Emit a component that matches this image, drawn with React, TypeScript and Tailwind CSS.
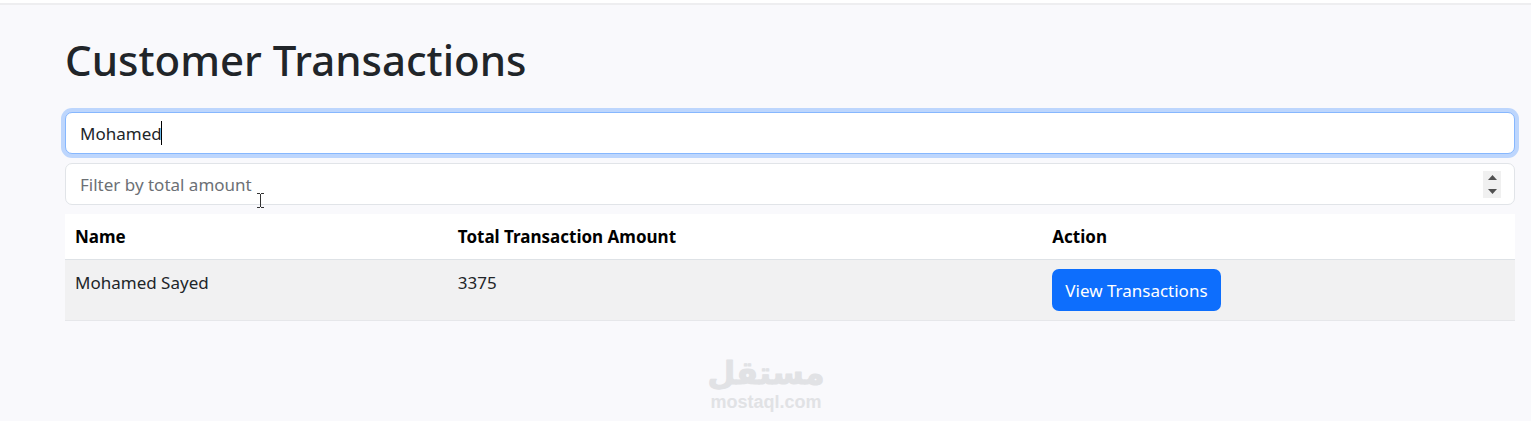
import { useRef, useState } from 'react';

interface Customer {
  id: number;
  name: string;
  total: number;
}

const customers: Customer[] = [
  { id: 1, name: 'Mohamed Sayed', total: 3375 },
  { id: 2, name: 'Ahmed Ali', total: 3000 },
];

function Watermark() {
  return (
    <svg
      className="w-32 h-16 fill-[#e1e2e5] stroke-[#e1e2e5]"
      viewBox="0 0 128 64"
      role="img"
      aria-label="mostaql.com"
    >
      <text
        x="64"
        y="31"
        textAnchor="middle"
        direction="rtl"
        className="text-[32px] font-bold font-['DejaVu_Sans',sans-serif]"
        strokeWidth="1"
        strokeLinejoin="round"
      >
        مستقل
      </text>
      <text
        x="64"
        y="55"
        textAnchor="middle"
        stroke="none"
        className="text-[18px] font-bold font-['Liberation_Sans',sans-serif]"
      >
        mostaql.com
      </text>
    </svg>
  );
}

export default function App() {
  const [nameFilter, setNameFilter] = useState('Mohamed');
  const [amountFilter, setAmountFilter] = useState('');
  const amountRef = useRef<HTMLInputElement>(null);

  const filtered = customers.filter(
    (customer) =>
      customer.name.toLowerCase().includes(nameFilter.toLowerCase()) &&
      (amountFilter === '' || customer.total === Number(amountFilter))
  );

  const step = (up: boolean) => {
    const input = amountRef.current;
    if (!input) return;
    if (up) input.stepUp();
    else input.stepDown();
    setAmountFilter(input.value);
  };

  return (
    <div className="min-h-screen bg-[#f9f9fc] border-t-[3px] border-white text-[#212529] text-[17px] leading-[27px] font-['Noto_Sans',sans-serif]">
      <div className="border-t-2 border-[#eeeef0] pl-[65px] pr-4 pt-7">
        <h1 className="text-[42px] leading-[54px] font-medium mb-[25px]">Customer Transactions</h1>

        <div className="relative mb-[9px]">
          <input
            type="text"
            aria-label="Filter by customer name"
            placeholder="Filter by customer name"
            value={nameFilter}
            onChange={(e) => setNameFilter(e.target.value)}
            className="block w-full h-[42px] px-[14px] bg-white border border-[#86b7fe] rounded-[7px] ring-4 ring-[#bdd6fd] outline-none caret-transparent"
          />
          <div className="absolute inset-y-0 left-[14px] flex items-center pointer-events-none" aria-hidden="true">
            <span className="invisible whitespace-pre">{nameFilter}</span>
            <span className="w-px h-6 bg-black" />
          </div>
        </div>

        <div className="relative mb-[9px]">
          <input
            ref={amountRef}
            type="number"
            aria-label="Filter by total amount"
            placeholder="Filter by total amount"
            value={amountFilter}
            onChange={(e) => setAmountFilter(e.target.value)}
            className="block w-full h-[42px] px-[14px] bg-white border border-[#e1e4e8] rounded-[7px] outline-none placeholder:text-[#6c7075] [appearance:textfield]"
          />
          <div className="absolute inset-y-0 right-[14px] flex flex-col justify-center">
            <button
              type="button"
              aria-label="Increase"
              onClick={() => step(true)}
              className="w-[18px] h-[14px] bg-[#f0f0f0] flex items-center justify-center"
            >
              <svg className="w-[9px] h-[5px] fill-[#505050]" viewBox="0 0 9 5">
                <path d="M4.5 0L9 5H0z" />
              </svg>
            </button>
            <button
              type="button"
              aria-label="Decrease"
              onClick={() => step(false)}
              className="w-[18px] h-[13px] bg-[#f0f0f0] flex items-center justify-center"
            >
              <svg className="w-[9px] h-[5px] fill-[#505050]" viewBox="0 0 9 5">
                <path d="M0 0h9L4.5 5z" />
              </svg>
            </button>
          </div>
          <svg
            className="absolute left-48 top-[30px] w-[7px] h-[15px] pointer-events-none"
            viewBox="0 0 7 15"
            fill="none"
            stroke="#333"
            aria-hidden="true"
          >
            <path d="M0 .5h3M4 .5h3M3.5 1v13M0 14.5h3M4 14.5h3" />
          </svg>
        </div>

        <table className="w-full table-fixed text-left">
          <thead className="bg-white text-black">
            <tr className="border-b border-[#dee2e6]">
              <th className="w-[26.4%] px-[10px] py-[9px] font-bold">Name</th>
              <th className="w-[41%] px-[10px] py-[9px] font-bold">Total Transaction Amount</th>
              <th className="px-[10px] py-[9px] font-bold">Action</th>
            </tr>
          </thead>
          <tbody>
            {filtered.map((customer) => (
              <tr key={customer.id} className="bg-[#f1f1f2] border-b border-[#e6e7ea] align-top">
                <td className="px-[10px] py-[9px]">{customer.name}</td>
                <td className="px-[10px] py-[9px]">{customer.total}</td>
                <td className="px-[10px] py-[9px]">
                  <button type="button" className="block h-[42px] px-[13px] bg-[#0d6efd] text-white rounded-[7px] hover:bg-[#0b5ed7]">
                    View Transactions
                  </button>
                </td>
              </tr>
            ))}
          </tbody>
        </table>
      </div>

      <div className="flex justify-center pt-8">
        <Watermark />
      </div>
    </div>
  );
}
